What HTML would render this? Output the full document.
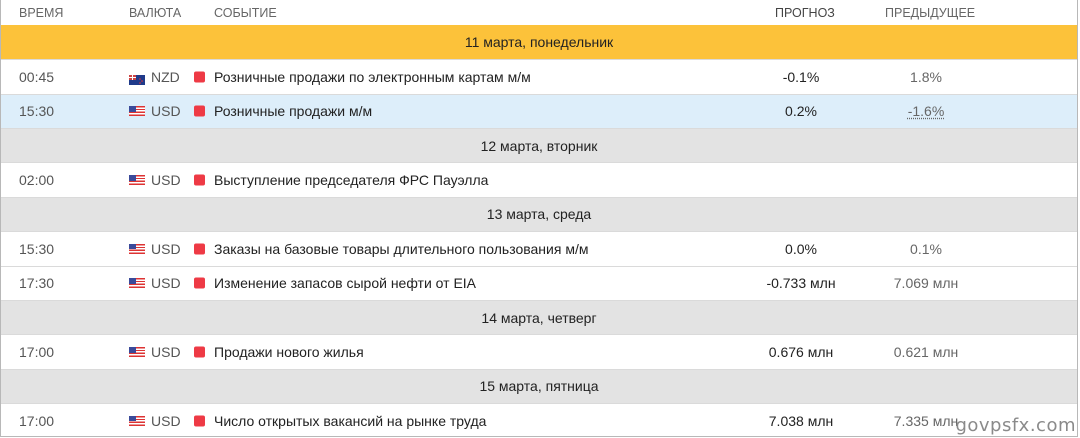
<!DOCTYPE html>
<html><head><meta charset="utf-8"><style>
*{margin:0;padding:0;box-sizing:border-box}
body{width:1080px;height:438px;background:#fff;font-family:"Liberation Sans",sans-serif;font-size:14px;color:#222;overflow:hidden;position:relative}
.wrap{position:absolute;left:0;top:0;width:1078px;height:437px;border:1px solid #b8b8b8;border-top:none}
.hdr{height:25px;position:relative;color:#666;font-size:12.5px}
.hdr span{position:absolute;top:6px}
.r{height:34.36px;position:relative;border-top:1px solid #dadada}
.r span{position:absolute;top:50%;transform:translateY(-50%);white-space:nowrap}
.day{background:#e3e3e3;text-align:center}
.day span{left:0;right:0}
.y{background:#fcc23a;border-top:none}
.b{background:#ddeefa}
.t{left:18px;color:#555}
.f{left:128px;width:16px;height:10px}
.c{left:150px;color:#555}
.sq{left:193px;width:11px;height:11px;background:#ee3a45;border-radius:2px}
.e{left:213px}
.p{left:740px;width:120px;text-align:center}
.v{left:865px;width:120px;text-align:center;color:#666}
.wm{position:absolute;right:4px;bottom:2px;font-size:18px;color:#8a8a8a;font-family:"DejaVu Sans",sans-serif;letter-spacing:0.5px}
.us{background:repeating-linear-gradient(#d33 0 1.4px,#fff 1.4px 2.8px)}
.us::before{content:"";position:absolute;left:0;top:0;width:7px;height:5.6px;background:#3a4a9a}
</style></head><body><div class="wrap">
<div class="hdr"><span style="left:18px">ВРЕМЯ</span><span style="left:128px">ВАЛЮТА</span><span style="left:213px">СОБЫТИЕ</span><span style="left:774px;color:#444">ПРОГНОЗ</span><span style="left:884px">ПРЕДЫДУЩЕЕ</span></div>
<div class="r day y"><span>11 марта, понедельник</span></div>
<div class="r"><span class="t">00:45</span><span class="f"><svg width="16" height="10"><rect width="16" height="10" fill="#1f3a8a"/><rect width="7" height="5" fill="#c44"/><path d="M0 2.5H7M3.5 0V5" stroke="#fff" stroke-width="1"/><circle cx="11" cy="4" r=".8" fill="#e33"/><circle cx="13" cy="6" r=".8" fill="#e33"/><circle cx="11" cy="8" r=".8" fill="#e33"/></svg></span><span class="c">NZD</span><span class="sq"></span><span class="e">Розничные продажи по электронным картам м/м</span><span class="p">-0.1%</span><span class="v">1.8%</span></div>
<div class="r b"><span class="t">15:30</span><span class="f us"></span><span class="c">USD</span><span class="sq"></span><span class="e">Розничные продажи м/м</span><span class="p">0.2%</span><span class="v"><u style="text-decoration:underline dotted">-1.6%</u></span></div>
<div class="r day"><span>12 марта, вторник</span></div>
<div class="r"><span class="t">02:00</span><span class="f us"></span><span class="c">USD</span><span class="sq"></span><span class="e">Выступление председателя ФРС Пауэлла</span></div>
<div class="r day"><span>13 марта, среда</span></div>
<div class="r"><span class="t">15:30</span><span class="f us"></span><span class="c">USD</span><span class="sq"></span><span class="e">Заказы на базовые товары длительного пользования м/м</span><span class="p">0.0%</span><span class="v">0.1%</span></div>
<div class="r"><span class="t">17:30</span><span class="f us"></span><span class="c">USD</span><span class="sq"></span><span class="e">Изменение запасов сырой нефти от EIA</span><span class="p">-0.733 млн</span><span class="v">7.069 млн</span></div>
<div class="r day"><span>14 марта, четверг</span></div>
<div class="r"><span class="t">17:00</span><span class="f us"></span><span class="c">USD</span><span class="sq"></span><span class="e">Продажи нового жилья</span><span class="p">0.676 млн</span><span class="v">0.621 млн</span></div>
<div class="r day"><span>15 марта, пятница</span></div>
<div class="r"><span class="t">17:00</span><span class="f us"></span><span class="c">USD</span><span class="sq"></span><span class="e">Число открытых вакансий на рынке труда</span><span class="p">7.038 млн</span><span class="v">7.335 млн</span></div>
</div>
<div class="wm">govpsfx.com</div>
</body></html>
